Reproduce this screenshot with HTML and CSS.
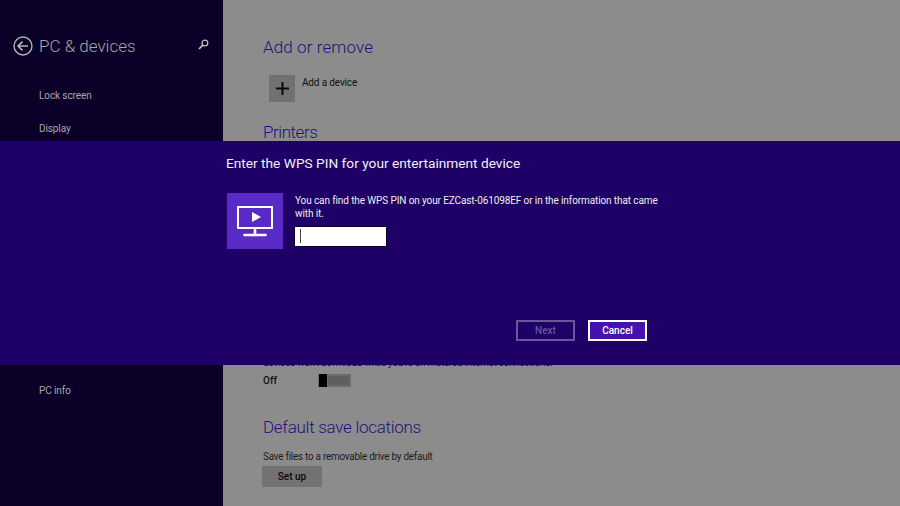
FILE: index.html
```html
<!DOCTYPE html>
<html lang="en">
<head>
<meta charset="utf-8">
<title>PC &amp; devices</title>
<link rel="stylesheet" href="styles.css">
</head>
<body>
<div class="screen">
  <aside class="sidebar">
    <div class="side-head">
      <svg class="back" width="20" height="20" viewBox="0 0 20 20" fill="none" stroke="#b4b4b4">
        <circle cx="10" cy="10" r="9" stroke-width="1.400"/>
        <path d="M5 10H15M9.500 5.600 5 10l4.500 4.400" stroke-width="1.600"/>
      </svg>
      <h1 class="side-title">PC &amp; devices</h1>
      <svg class="search" width="11" height="11" viewBox="0 0 11 11" fill="none" stroke="#c4c4c4">
        <circle cx="6.900" cy="4" r="2.900" stroke-width="1.200"/>
        <path d="M4.800 6.100 1 10" stroke-width="1.700"/>
      </svg>
    </div>
    <nav class="side-nav">
      <a class="nav-item">Lock screen</a>
      <a class="nav-item">Display</a>
      <a class="nav-item nav-info">PC info</a>
    </nav>
  </aside>
  <main class="content">
    <h2 class="heading">Add or remove</h2>
    <div class="add-row">
      <span class="add-tile">
        <svg width="13" height="13" viewBox="0 0 13 13"><path d="M0 6.500h13M6.500 0v13" stroke="#0a0a0a" stroke-width="2"/></svg>
      </span>
      <span class="add-label">Add a device</span>
    </div>
    <h2 class="heading printers">Printers</h2>
    <p class="metered">devices won't download while you're on metered Internet connections.</p>
    <div class="toggle-row">
      <span class="toggle-label">Off</span>
      <span class="toggle"><span class="toggle-thumb"></span><span class="toggle-fill"></span></span>
    </div>
    <h2 class="heading save">Default save locations</h2>
    <p class="save-text">Save files to a removable drive by default</p>
    <button class="setup">Set up</button>
  </main>
  <section class="dialog">
    <h2 class="dialog-title">Enter the WPS PIN for your entertainment device</h2>
    <div class="dialog-body">
      <div class="device-tile">
        <svg width="36" height="31" viewBox="0 0 36 31" fill="none" stroke="#fff">
          <rect x="1" y="1" width="34" height="21" stroke-width="2"/>
          <path d="M18 23v5" stroke-width="2.600"/>
          <path d="M7.500 29h21" stroke-width="2.600" stroke-linecap="round"/>
          <path d="M15 6 24 11 15 16z" fill="#fff" stroke="none"/>
        </svg>
      </div>
      <div class="dialog-text">
        <p class="dialog-msg">You can find the WPS PIN on your EZCast-061098EF or in the information that came with it.</p>
        <div class="pin-input"><span class="caret"></span></div>
      </div>
    </div>
    <div class="dialog-actions">
      <button class="btn btn-next">Next</button>
      <button class="btn btn-cancel">Cancel</button>
    </div>
  </section>
</div>
</body>
</html>
```
FILE: styles.css
```css
* { box-sizing: border-box; }
html, body { margin: 0; padding: 0; }
body { font-family: Roboto, "Open Sans", "Liberation Sans", sans-serif; }
h1, h2, p { margin: 0; font-weight: normal; }

.screen { position: relative; width: 900px; height: 506px; display: flex; overflow: hidden; background: #8c8c8c; }

.sidebar { width: 223px; flex: none; background: #0a0028; padding: 36px 12px 0 13px; }
.side-head { display: flex; align-items: center; height: 20px; }
.back { flex: none; }
.side-title { font-size: 17px; font-weight: 300; color: #a8a8a8; margin-left: 6px; flex: 1; white-space: nowrap; }
.search { flex: none; margin-right: 2px; margin-top: -3px; }
.side-nav { display: flex; flex-direction: column; padding: 32px 0 0 26px; }
.nav-item { font-size: 10px; letter-spacing: -0.1px; line-height: 16px; height: 33px; color: #a8a8a8; }
.nav-info { margin-top: 229px; }

.content { flex: 1; padding: 35px 0 0 40px; min-width: 0; }
.heading { font-size: 17px; font-weight: 300; line-height: 24px; letter-spacing: 0.1px; color: #24107a; }
.add-row { display: flex; margin: 16px 0 0 6px; }
.add-tile { width: 26px; height: 27px; background: #717171; display: flex; align-items: center; justify-content: center; }
.add-label { font-size: 10px; letter-spacing: -0.15px; line-height: 14px; color: #111; margin: 1px 0 0 7px; }
.printers { margin-top: 18px; letter-spacing: -0.45px; }
.metered { font-size: 10px; letter-spacing: -0.3px; line-height: 14px; color: #111; margin-top: 212px; white-space: nowrap; }
.toggle-row { display: flex; align-items: center; margin-top: 2px; height: 16px; }
.toggle-label { font-size: 10px; font-weight: 500; color: #111; width: 55px; }
.toggle { width: 33px; height: 13px; border: 1px solid #6a6a6a; background: #6d6d6d; display: flex; }
.toggle-thumb { width: 8px; background: #000; margin: -1px 0; }
.toggle-fill { flex: 1; background: #5e5e5e; margin: 1px; }
.save { margin-top: 27px; letter-spacing: -0.28px; }
.save-text { font-size: 10px; letter-spacing: -0.28px; line-height: 14px; color: #1c1c1c; margin-top: 11px; }
.setup { display: block; width: 60px; height: 21px; border: 0; padding: 0; margin: 2px 0 0 -1px; background: #727272; color: #0a0a0a; font: 500 10px Roboto, sans-serif; }

.dialog { position: absolute; left: 0; right: 0; top: 141px; height: 224px; background: #1f0066; color: #fff; padding: 13px 0 0 226px; }
.dialog-title { font-size: 13.700px; line-height: 19px; color: #f0f0f0; }
.dialog-body { display: flex; margin-top: 20px; }
.device-tile { width: 56px; height: 56px; flex: none; margin-left: 1px; background: #5a2ac6; display: flex; align-items: center; justify-content: center; }
.dialog-text { width: 372px; margin-left: 12px; }
.dialog-msg { font-size: 10px; letter-spacing: -0.11px; line-height: 13px; color: #eee; padding-top: 1px; }
.pin-input { width: 93px; height: 21px; margin-top: 6px; background: #fff; border: 1px solid #0a0028; padding: 2px 0 0 5px; margin-left: -1px; }
.caret { display: block; width: 1px; height: 14px; background: #444; }
.dialog-actions { display: flex; gap: 13px; margin: 71px 0 0 290px; }
.btn { width: 59px; height: 21px; padding: 0; font: 500 10px Roboto, sans-serif; }
.btn-next { background: transparent; border: 2px solid #6a559f; color: #6a559f; }
.btn-cancel { background: #4512ad; border: 2px solid #fff; color: #fff; }
```
